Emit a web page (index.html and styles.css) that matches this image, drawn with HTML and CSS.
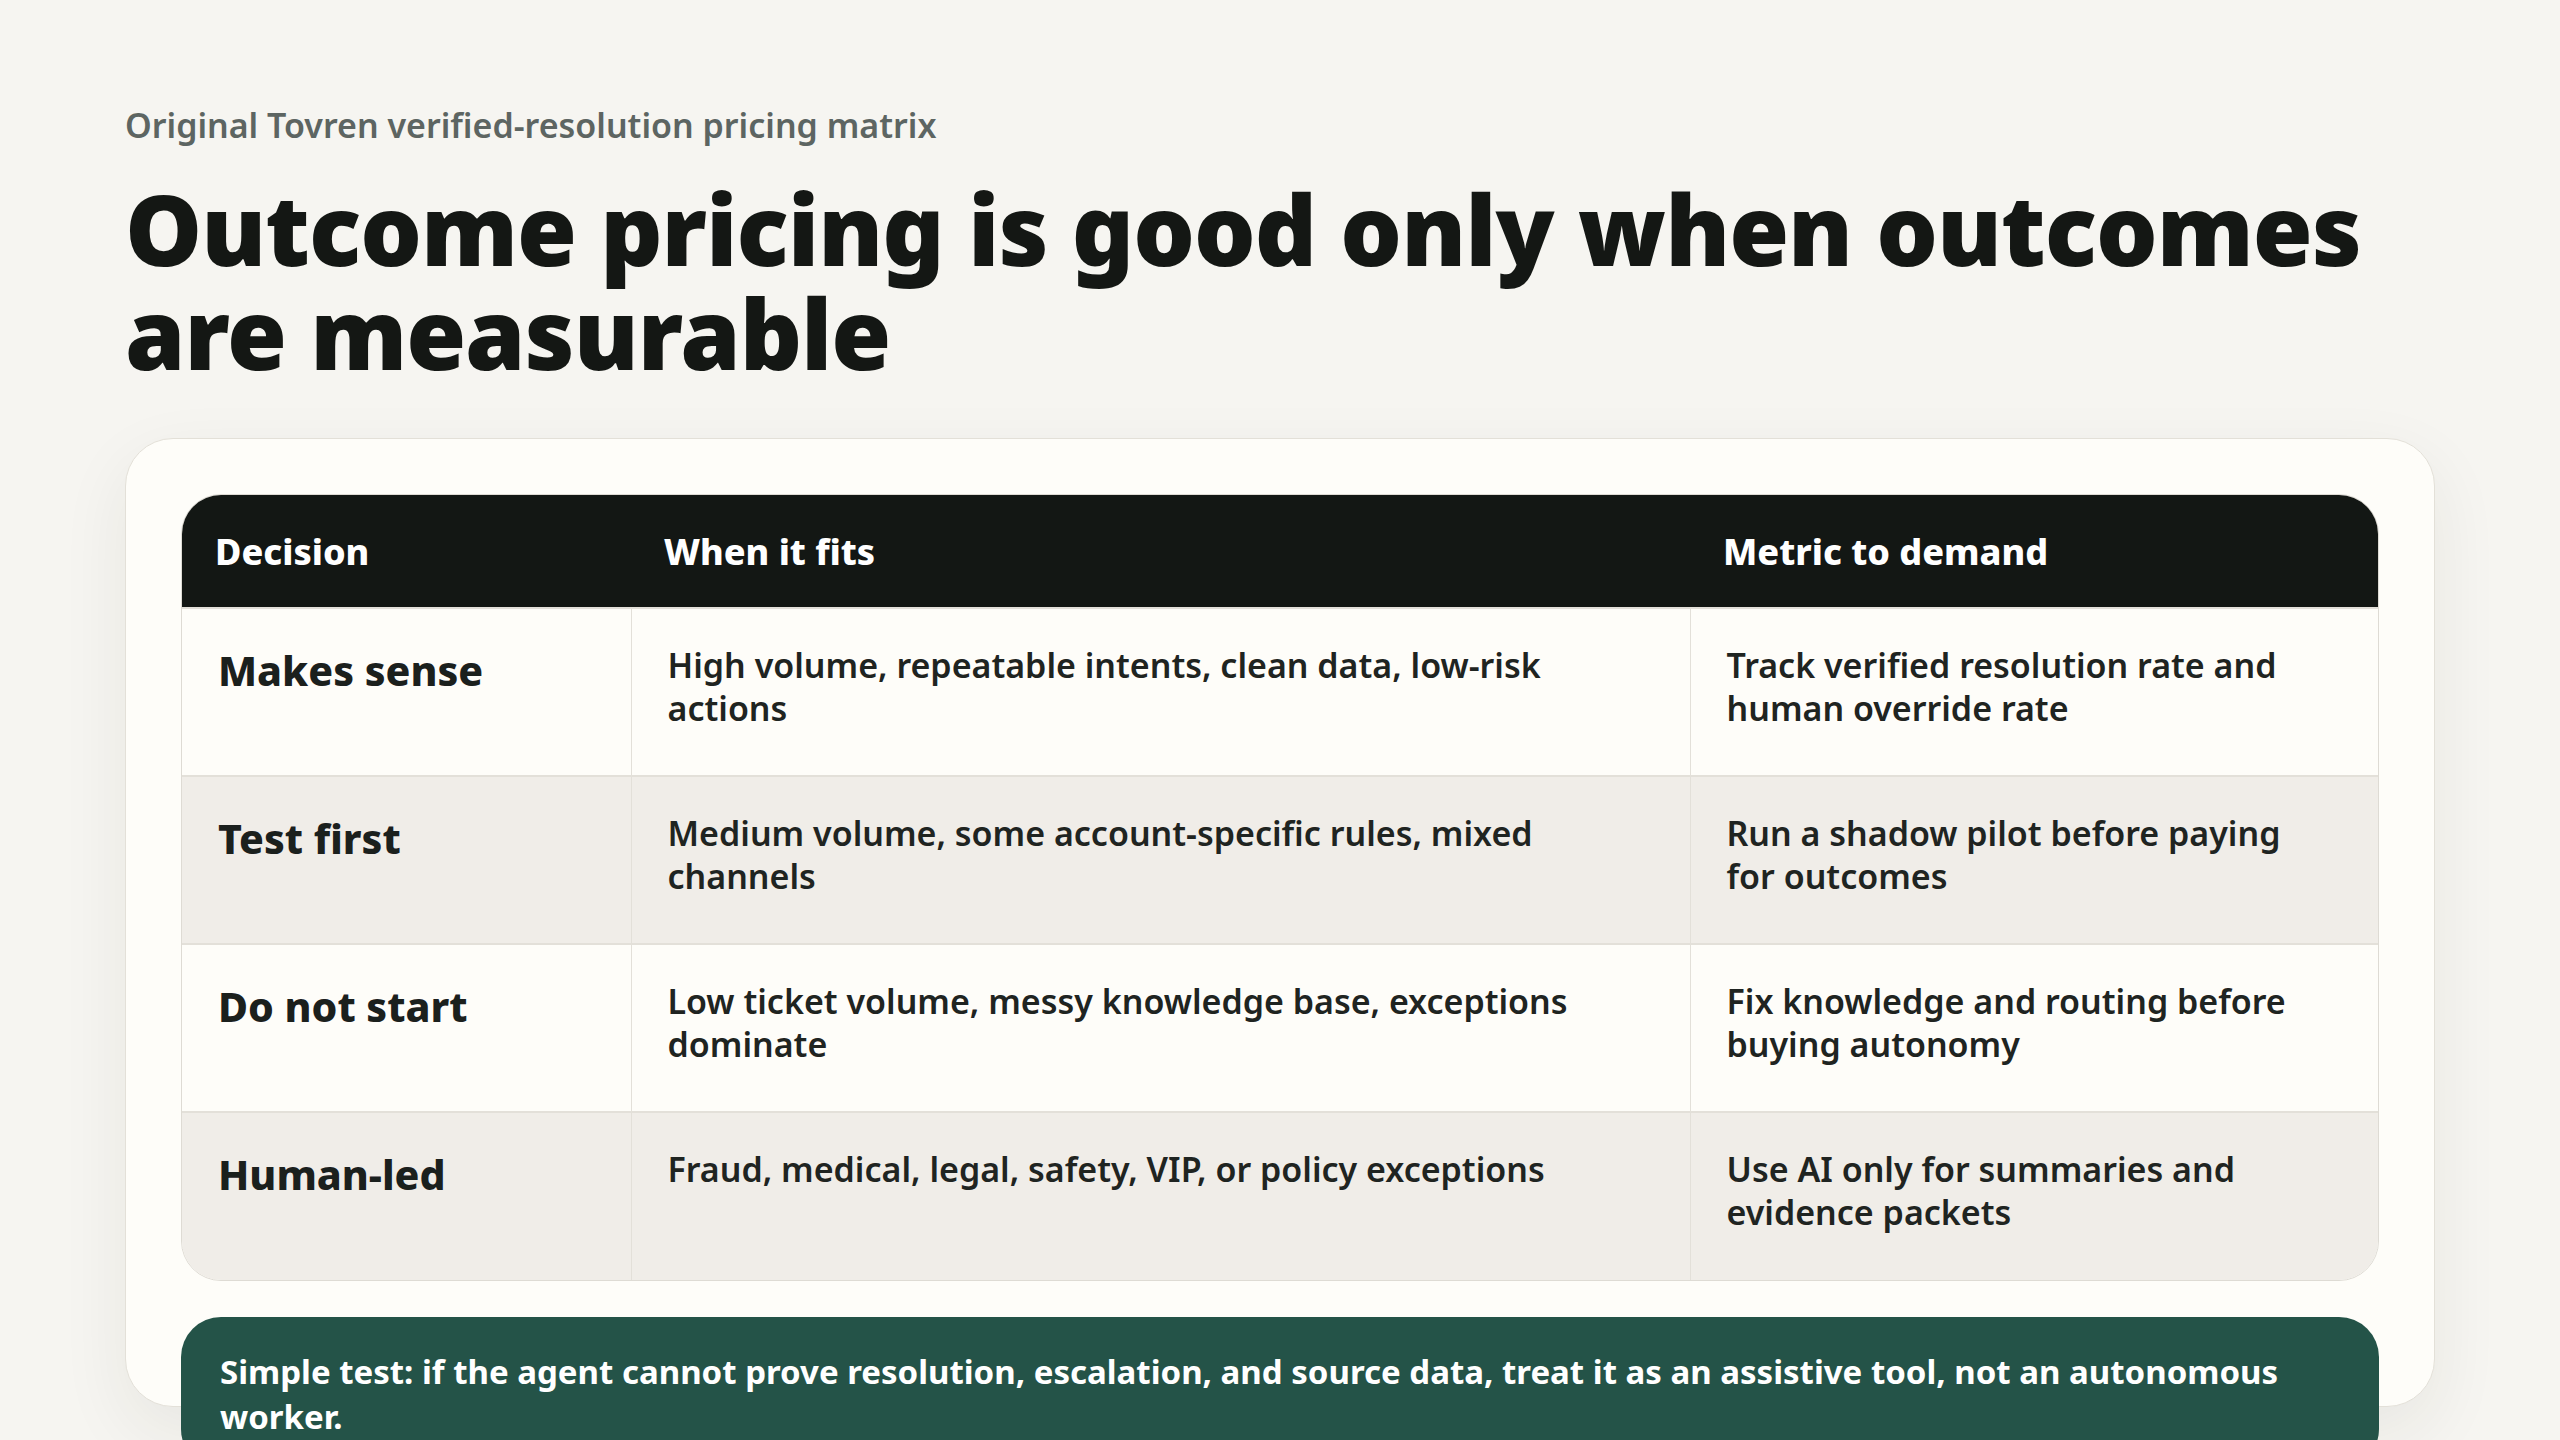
FILE: index.html
```html
<!DOCTYPE html>
<html lang="en">
<head>
<meta charset="utf-8">
<title>Outcome pricing matrix</title>
<link rel="stylesheet" href="styles.css">
</head>
<body>
<main class="page">
  <p class="eyebrow">Original Tovren verified-resolution pricing matrix</p>
  <h1 class="title">Outcome pricing is good only when outcomes are measurable</h1>
  <section class="card">
    <div class="matrix">
      <table class="grid">
        <colgroup>
          <col class="c1">
          <col class="c2">
          <col class="c3">
        </colgroup>
        <thead>
          <tr class="head">
            <th>Decision</th>
            <th>When it fits</th>
            <th>Metric to demand</th>
          </tr>
        </thead>
        <tbody>
          <tr class="row">
            <td class="label">Makes sense</td>
            <td>High volume, repeatable intents, clean data, low-risk actions</td>
            <td>Track verified resolution rate and human override rate</td>
          </tr>
          <tr class="row alt">
            <td class="label">Test first</td>
            <td>Medium volume, some account-specific rules, mixed channels</td>
            <td>Run a shadow pilot before paying for outcomes</td>
          </tr>
          <tr class="row">
            <td class="label">Do not start</td>
            <td>Low ticket volume, messy knowledge base, exceptions dominate</td>
            <td>Fix knowledge and routing before buying autonomy</td>
          </tr>
          <tr class="row alt last">
            <td class="label">Human-led</td>
            <td>Fraud, medical, legal, safety, VIP, or policy exceptions</td>
            <td>Use AI only for summaries and evidence packets</td>
          </tr>
        </tbody>
      </table>
    </div>
    <div class="note">Simple test: if the agent cannot prove resolution, escalation, and source data, treat it as an assistive tool, not an autonomous worker.</div>
  </section>
</main>
</body>
</html>
```

FILE: styles.css
```css
html, body {
  margin: 0;
  padding: 0;
}

body {
  background: #f6f5f1;
  font-family: "Noto Sans", "Open Sans", sans-serif;
  color: #141714;
  overflow: hidden;
  height: 1440px;
}

.page {
  padding: 103px 125px 0 125px;
}

.eyebrow {
  margin: 0;
  font-size: 34px;
  line-height: 44px;
  font-weight: 600;
  color: #5d6562;
}

.title {
  margin: 29px 0 0 0;
  font-size: 97px;
  line-height: 104px;
  font-weight: 900;
  letter-spacing: -1px;
  color: #141714;
}

.card {
  margin-top: 54px;
  height: 969px;
  box-sizing: border-box;
  padding: 55px;
  background: #fefdf9;
  border: 1px solid #e3e0d8;
  border-radius: 48px;
  box-shadow: 0 24px 70px rgba(40, 36, 24, 0.07);
}

.matrix {
  border: 1px solid #dedbd4;
  border-radius: 40px;
  overflow: hidden;
}

.grid {
  width: 100%;
  border-collapse: collapse;
  table-layout: fixed;
}

.c1 { width: 449px; }
.c2 { width: 1059px; }
.c3 { width: auto; }

.head {
  height: 113px;
  background: #131714;
}

.head th {
  text-align: left;
  color: #ffffff;
  font-size: 36px;
  font-weight: 800;
  padding: 0 33px;
  vertical-align: middle;
}

.row {
  height: 168px;
  background: #fefdf9;
}

.row.alt {
  background: #f0ede8;
}

.row td {
  vertical-align: top;
  padding: 35px 50px 0 36px;
  font-size: 34px;
  line-height: 43px;
  font-weight: 600;
  color: #1f2421;
  border-top: 2px solid #e3e0d9;
  border-left: 1px solid #e3e0d9;
}

.row td:first-child {
  border-left: none;
}

.row td.label {
  font-size: 41px;
  line-height: 54px;
  font-weight: 800;
  color: #1b201d;
  padding-top: 34px;
}

.note {
  margin-top: 36px;
  background: #245348;
  border-radius: 40px;
  padding: 32px 39px 30px 39px;
  color: #ffffff;
  font-size: 33px;
  line-height: 45px;
  font-weight: 700;
}
```
